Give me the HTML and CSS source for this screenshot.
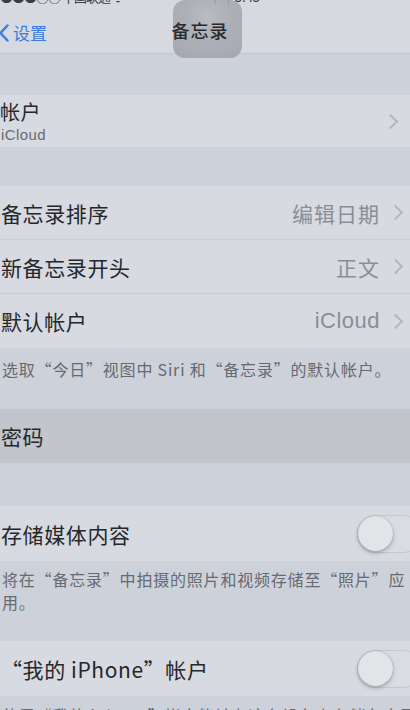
FILE: index.html
```html
<!DOCTYPE html>
<html lang="zh-CN">

<head>
    <meta charset="UTF-8">
    <meta name="viewport" content="width=device-width, initial-scale=1.0">
    <title>备忘录</title>
    <link rel="stylesheet" href="styles.css">
</head>

<body>
    <div class="screen">
        <div class="status">
            <span class="carrier">●●●○○ 中国联通 ᯤ</span>
            <span class="clock">下午3:45</span>
        </div>

        <header class="navbar">
            <a class="back" href="#">
                <svg class="back-icon" viewBox="0 0 10 18" width="10" height="18">
                    <path d="M8.5 1.5 L1.5 9 L8.5 16.5" fill="none" stroke="currentColor" stroke-width="2.4" stroke-linecap="round" stroke-linejoin="round"/>
                </svg>
                设置
            </a>
            <h1>备忘录</h1>
            <div class="glare"></div>
        </header>

        <div class="gap gap-first"></div>

        <ul class="group">
            <li class="row row-account">
                <div class="label-stack">
                    <span class="label">帐户</span>
                    <span class="sublabel">iCloud</span>
                </div>
                <span class="chevron"></span>
            </li>
        </ul>

        <div class="gap gap-second"></div>

        <ul class="group">
            <li class="row">
                <span class="label">备忘录排序</span>
                <span class="value">编辑日期</span>
                <span class="chevron"></span>
            </li>
            <li class="row">
                <span class="label">新备忘录开头</span>
                <span class="value">正文</span>
                <span class="chevron"></span>
            </li>
            <li class="row">
                <span class="label">默认帐户</span>
                <span class="value value-latin">iCloud</span>
                <span class="chevron"></span>
            </li>
        </ul>

        <p class="note note-one">选取“今日”视图中 Siri 和“备忘录”的默认帐户。</p>

        <ul class="group group-dim">
            <li class="row">
                <span class="label">密码</span>
            </li>
        </ul>

        <div class="gap gap-third"></div>

        <ul class="group">
            <li class="row row-toggle">
                <span class="label">存储媒体内容</span>
                <span class="toggle"><span class="knob"></span></span>
            </li>
        </ul>

        <p class="note note-two">将在“备忘录”中拍摄的照片和视频存储至“照片”应用。</p>

        <ul class="group">
            <li class="row row-toggle">
                <span class="label">“我的 iPhone”帐户</span>
                <span class="toggle"><span class="knob"></span></span>
            </li>
        </ul>

        <p class="note note-three">使用“我的 iPhone”帐户能够在这台设备上存储备忘录。</p>
    </div>
</body>

</html>
```

FILE: styles.css
```css
body {
    margin: 0;
    padding: 0;
    background-color: #cdd1d9;
    font-family: "Noto Sans CJK SC", "Noto Sans", sans-serif;
    color: #25272b;
}

.screen {
    width: 410px;
    height: 710px;
    overflow: hidden;
    background-color: #cdd1d9;
}

ul {
    margin: 0;
    padding: 0;
    list-style: none;
}

/* status bar, mostly cut off at the top edge */
.status {
    height: 6px;
    overflow: hidden;
    display: flex;
    font-size: 13px;
    color: #3a3c40;
    background-color: #d6d9df;
}

.status span {
    margin-top: -11px;
    line-height: 16px;
}

.carrier {
    letter-spacing: -1px;
}

.clock {
    margin-left: 86px;
}

/* navigation bar */
.navbar {
    position: relative;
    height: 46px;
    padding-top: 1px;
    display: flex;
    align-items: center;
    justify-content: center;
    background-color: #d6d9df;
    border-bottom: 1px solid #c3c6cc;
}

.back {
    position: absolute;
    left: 0;
    top: 14px;
    display: flex;
    align-items: center;
    gap: 4px;
    color: #3c7be0;
    text-decoration: none;
    font-size: 17px;
    z-index: 1;
}

.back-icon {
    margin-left: -1px;
}

.navbar h1 {
    margin: 0 0 0 -10px;
    font-size: 18px;
    font-weight: 500;
    color: #2a2b2e;
    position: relative;
    z-index: 1;
    letter-spacing: 1px;
}

.glare {
    position: absolute;
    left: 173px;
    top: -6px;
    width: 69px;
    height: 58px;
    border-radius: 12px;
    background: radial-gradient(circle at 50% 30%, #b4b7bc 0, #a6a9af 40%, #9c9fa5 100%);
    opacity: 0.85;
}

/* gaps between groups */
.gap-first {
    height: 41px;
}

.gap-second {
    height: 39px;
}

.gap-third {
    height: 43px;
}

/* cell groups */
.group {
    background-color: #d7dae1;
}

.group-dim {
    background-color: #c2c5cc;
}

.row {
    height: 53px;
    display: flex;
    align-items: center;
    padding-left: 1px;
    border-bottom: 1px solid #cbced5;
    overflow: hidden;
}

.row:last-child {
    border-bottom: none;
    height: 54px;
}

.row-account {
    height: 52px !important;
}

.label-stack {
    display: flex;
    flex-direction: column;
    gap: 3px;
    margin-top: 2px;
    flex: 1;
}

.label {
    font-size: 21px;
    line-height: 26px;
    letter-spacing: 0.6px;
    flex: 1;
}

.label-stack .label {
    font-size: 20px;
    line-height: 22px;
    margin-left: -1px;
}

.sublabel {
    font-size: 15px;
    line-height: 17px;
    color: #686b71;
    letter-spacing: 0.4px;
    font-family: "Liberation Sans", "Noto Sans CJK SC", sans-serif;
}

.value {
    font-size: 21px;
    color: #8b8e94;
    letter-spacing: 1px;
    margin-right: 10px;
}

.value-latin {
    font-family: "Liberation Sans", "Noto Sans CJK SC", sans-serif;
    font-size: 22px;
    letter-spacing: 0.5px;
}

.chevron {
    width: 9px;
    height: 9px;
    border-top: 2px solid #b4b7bd;
    border-right: 2px solid #b4b7bd;
    transform: rotate(45deg);
    margin-right: 9px;
}

.row-account .chevron {
    margin-right: 14px;
}

/* switches, cropped at the right edge */
.row-toggle {
    height: 55px !important;
}

.toggle {
    width: 62px;
    height: 36px;
    border-radius: 18px;
    border: 1.5px solid #c4c7cd;
    background-color: #d9dce2;
    margin-right: -11px;
    display: flex;
    align-items: center;
}

.knob {
    width: 35px;
    height: 35px;
    border-radius: 50%;
    background-color: #e2e4e8;
    box-shadow: 0 2px 4px rgba(0, 0, 0, 0.25), 0 0 1px rgba(0, 0, 0, 0.3);
}

/* footnotes under groups */
.note {
    margin: 0;
    font-size: 16px;
    line-height: 23px;
    color: #676a70;
    letter-spacing: 0.8px;
    padding-left: 2px;
}

.note-one {
    height: 51px;
    padding-top: 10px;
}

.note-two {
    height: 73px;
    padding-top: 7px;
    width: 410px;
}

.note-three {
    padding-top: 8px;
    white-space: nowrap;
}
```
